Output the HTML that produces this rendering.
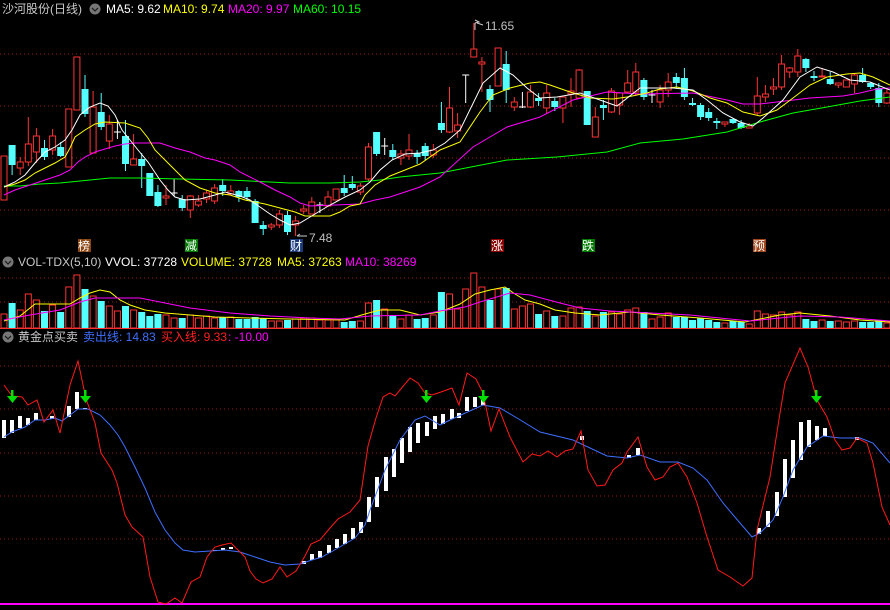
<!DOCTYPE html>
<html><head><meta charset="utf-8">
<style>
html,body{margin:0;padding:0;background:#000;width:890px;height:610px;overflow:hidden}
svg{position:absolute;left:0;top:0}
text{font-family:"Liberation Sans","Noto Sans CJK SC",sans-serif;font-size:12px}
</style></head><body>
<svg id="s" width="890" height="610" xmlns="http://www.w3.org/2000/svg">
<text x="2" y="13" fill="#c8c8c8">沙河股份(日线)</text>
<circle cx="95" cy="9" r="5.5" fill="#777"/><path d="M92 8l3 3 3-3" stroke="#222" fill="none" stroke-width="1.3"/>
<text x="106" y="13" fill="#fff">MA5: 9.62</text>
<text x="163" y="13" fill="#ffff00">MA10: 9.74</text>
<text x="228" y="13" fill="#ff00ff">MA20: 9.97</text>
<text x="293" y="13" fill="#00ff00">MA60: 10.15</text>

<circle cx="8" cy="262" r="5.5" fill="#777"/><path d="M5 261l3 3 3-3" stroke="#222" fill="none" stroke-width="1.3"/>
<text x="18" y="266" fill="#c8c8c8">VOL-TDX(5,10)</text>
<text x="105" y="266" fill="#fff">VVOL: 37728</text>
<text x="181" y="266" fill="#ffff00">VOLUME: 37728</text>
<text x="277" y="266" fill="#ffff00">MA5: 37263</text>
<text x="345" y="266" fill="#ff00ff">MA10: 38269</text>

<circle cx="8" cy="337" r="5.5" fill="#777"/><path d="M5 336l3 3 3-3" stroke="#222" fill="none" stroke-width="1.3"/>
<text x="18" y="341" fill="#c8c8c8">黄金点买卖</text>
<text x="83" y="341" fill="#3f6fff">卖出线: 14.83</text>
<text x="161" y="341" fill="#ff2020">买入线: 9.33</text>
<text x="228" y="341" fill="#ff00ff">: -10.00</text>
<g id="g"></g>
</svg>
<script>
var o='';
function L(y){o+='<line x1="0" x2="890" y1="'+y+'" y2="'+y+'" stroke="#9a1a1a" stroke-dasharray="1 3"/>';}
[54,106,158,210,278,302,366,409,453,496,539].forEach(L);
function X(i){return 4+i*8.1;}
var C=[
['r',156,200,156,200],['c',145,165,145,175],['r',162,168,157,175],['r',144,162,117,166],['r',136,152,128,163],['c',148,157,140,160],['r',136,150,129,155],['c',147,156,142,157],['r',109,167,109,167],['r',57,110,57,110],
['c',89,114,75,117],['r',107,153,91,153],['c',112,127,93,130],['r',124,141,115,149],['w',132,133,120,139],['c',136,164,120,171],['r',159,165,134,165],['c',159,166,153,188],['c',173,196,173,196],['c',192,206,185,207],
['r',196,198,185,205],['w',193,194,179,196],['c',199,208,195,211],['r',196,210,195,218],['r',201,205,195,207],['r',193,199,190,203],['r',188,201,184,204],['c',185,191,179,196],['r',191,194,185,195],['c',191,197,190,202],
['c',191,197,187,201],['c',201,223,199,223],['c',225,229,221,235],['r',225,227,223,230],['r',214,225,210,228],['c',215,232,211,235],['r',221,225,216,236],['r',209,211,205,214],['r',202,214,197,214],['w',205,206,202,213],
['r',197,206,191,207],['r',189,200,189,200],['c',188,193,175,196],['c',184,188,176,190],['r',186,192,183,195],['r',147,179,143,181],['c',132,154,132,156],['w',146,147,138,155],['c',150,157,144,160],['r',154,158,150,165],
['r',150,156,134,160],['c',153,157,150,164],['c',146,156,143,160],['r',150,155,144,158],['c',123,130,102,133],
['r',108,132,87,133],['r',125,131,113,138],['w',75,76,75,103],['r',49,57,23,57],['r',62,64,57,92],['c',89,100,85,112],['r',48,86,48,86],['c',64,90,51,103],['r',102,107,97,111],['w',107,108,92,108],
['r',92,107,85,108],['c',98,101,93,106],['r',93,108,85,113],['c',101,107,98,111],['r',97,108,97,123],['r',91,94,78,107],['r',70,98,69,99],['c',91,125,91,125],['r',117,137,107,137],['c',105,108,100,120],
['r',91,112,88,113],['r',93,105,92,115],['r',83,92,70,93],['r',72,92,63,96],['c',80,97,78,100],['w',95,96,90,103],['r',90,102,85,108],['r',82,90,73,97],['c',77,83,73,88],['c',78,97,68,100],
['c',103,105,98,106],['c',105,117,103,120],['c',112,118,108,121],['c',121,123,118,129],['r',122,124,122,127],['c',119,123,118,124],['c',123,128,120,129],['r',126,128,123,128],['r',96,113,77,115],['r',94,97,85,102],
['r',87,89,78,95],['r',64,87,55,90],['r',68,72,67,78],['r',56,72,49,77],['c',59,68,58,72],['c',76,78,71,81],['r',76,77,68,77],['c',79,84,72,85],['r',83,85,83,88],['r',80,87,80,87],
['r',75,84,73,93],['c',75,82,68,83],['c',83,87,82,89],['c',88,103,83,107],['r',93,103,88,104]];
var col={r:'#ff3232',c:'#54ffff',w:'#ffffff'};
C.forEach(function(d,i){var x=X(i),c=col[d[0]];
o+='<line x1="'+x+'" x2="'+x+'" y1="'+d[3]+'" y2="'+d[4]+'" stroke="'+c+'"/>';
var h=Math.max(d[2]-d[1],1);
if(d[0]=='r')o+='<rect x="'+(x-3)+'" y="'+d[1]+'" width="6" height="'+h+'" fill="#000" stroke="'+c+'"/>';
else if(d[0]=='c')o+='<rect x="'+(x-3.5)+'" y="'+d[1]+'" width="7" height="'+h+'" fill="'+c+'"/>';
else o+='<line x1="'+(x-3.5)+'" x2="'+(x+3.5)+'" y1="'+d[1]+'" y2="'+d[1]+'" stroke="'+c+'"/>';
});
function P(pts,c,w){o+='<polyline fill="none" stroke="'+c+'" stroke-width="'+(w||1)+'" points="'+pts.map(function(p){return p.join(',')}).join(' ')+'"/>';}
P([[4,186],[20,186],[40,184],[60,183],[90,180],[110,178],[140,178],[180,179],[230,180],[290,183],[330,183],[360,182],[380,180],[400,177],[420,175],[440,173],[507,160],[557,157],[607,152],[640,143],[683,139],[727,132],[760,122],[793,113],[827,107],[860,101],[890,97]],'#00ff00');
P([[4,195],[15,190],[30,185],[45,180],[60,175],[70,170],[78,162],[85,157],[95,152],[105,149],[115,146],[125,144],[135,143],[160,143],[175,148],[190,152],[205,158],[215,160],[230,165],[240,172],[250,177],[260,182],[275,190],[290,197],[300,203],[310,206],[335,205],[360,204],[375,200],[390,197],[405,192],[420,187],[440,177],[473,147],[507,127],[540,117],[573,100],[607,92],[640,94],[693,93],[727,100],[743,104],[760,104],[777,102],[810,98],[843,96],[860,93],[877,89],[890,88]],'#ff00ff');
P([[4,187],[15,184],[25,180],[35,173],[45,168],[55,163],[65,157],[70,148],[75,137],[85,130],[95,124],[105,122],[125,123],[140,128],[148,138],[155,150],[165,160],[175,170],[185,180],[200,188],[215,193],[230,195],[245,200],[265,204],[280,208],[295,212],[305,216],[330,216],[340,212],[350,206],[360,204],[365,195],[375,185],[390,176],[405,170],[420,164],[440,150],[460,142],[480,112],[493,95],[510,88],[530,83],[540,82],[550,85],[570,92],[590,98],[613,99],[627,97],[647,93],[660,89],[677,87],[693,91],[710,98],[727,103],[743,112],[760,116],[777,110],[793,98],[810,85],[827,77],[847,74],[860,73],[873,77],[890,85]],'#ffff00');
P([[4,187],[15,182],[25,175],[35,163],[45,152],[55,147],[65,140],[72,130],[80,115],[90,107],[100,103],[108,106],[115,115],[122,130],[130,140],[138,150],[148,162],[160,180],[168,190],[175,197],[185,200],[200,199],[215,195],[225,192],[240,196],[250,200],[260,207],[270,214],[280,220],[290,225],[300,223],[310,217],[320,211],[330,205],[345,197],[360,190],[370,182],[380,170],[392,160],[405,154],[420,153],[433,150],[445,143],[460,130],[483,83],[500,68],[513,75],[527,88],[540,98],[557,97],[580,93],[600,100],[617,106],[640,88],[673,88],[693,90],[707,100],[723,113],[740,122],[753,126],[763,118],[783,100],[800,77],[817,67],[833,72],[850,80],[870,82],[890,90]],'#ffffff');
// labels
o+='<line x1="475" y1="23" x2="475" y2="30" stroke="#ccc"/><path d="M475 20l4 2-4 1M477 23l6 2" stroke="#ccc" fill="none"/><text x="485" y="30" fill="#c0c0c0">11.65</text>';
o+='<path d="M297 236h10M297 236l3-2" stroke="#ccc" fill="none"/><text x="309" y="242" fill="#c0c0c0">7.48</text>';
[[78,'榜','#8b4513'],[185,'减','#007a00'],[290,'财','#1a3a7a'],[491,'涨','#8b0000'],[582,'跌','#007a00'],[753,'预','#a0461a']].forEach(function(b){
o+='<rect x="'+b[0]+'" y="239" width="13" height="13" fill="'+b[2]+'"/><text x="'+b[0]+'" y="250" fill="#fff">'+b[1]+'</text>';});
// volume
var V=[314,303,310,294,300,311,305,312,287,275,289,296,301,306,311,306,310,312,316,314,315,318,318,315,318,316,318,317,317,319,319,317,318,321,321,320,319,318,318,320,320,320,322,321,321,303,300,309,315,319,315,319,318,315,292,
294,309,289,273,287,300,289,288,309,306,304,314,311,316,316,308,307,311,316,312,312,314,310,308,312,319,317,313,317,317,320,318,320,322,323,321,322,324,311,314,315,312,315,312,319,321,320,321,321,322,321,322,322,320,323];
V.forEach(function(t,i){if(i>=C.length)return;var x=X(i),k=C[i][0];
if(k=='c')o+='<rect x="'+(x-3.5)+'" y="'+t+'" width="7" height="'+(328-t)+'" fill="#54ffff"/>';
else o+='<rect x="'+(x-3)+'" y="'+t+'" width="6" height="'+(328-t)+'" fill="#000" stroke="#ff3232"/>';});
o+='<line x1="0" x2="890" y1="328.5" y2="328.5" stroke="#ff3232"/>';
P([[4,321],[20,316],[35,304],[70,304],[80,298],[90,293],[100,290],[110,292],[120,300],[130,305],[145,310],[165,313],[190,315],[215,317],[250,318],[290,319],[345,320],[365,314],[380,310],[400,310],[420,315],[440,312],[460,304],[475,294],[490,290],[505,287],[515,294],[525,300],[540,304],[555,310],[575,313],[600,315],[630,312],[660,315],[700,318],[745,322],[760,319],[780,315],[800,313],[830,316],[860,320],[890,322]],'#ffff00');
P([[4,320],[30,315],[60,310],[80,302],[95,298],[140,298],[160,302],[190,308],[230,313],[270,316],[310,318],[340,319],[370,316],[420,315],[440,311],[465,307],[480,302],[500,296],[510,293],[530,295],[560,303],[580,308],[610,311],[650,313],[690,315],[720,318],[750,321],[780,318],[800,316],[840,317],[890,321]],'#ff00ff');
// bottom indicator
o+='<line x1="0" x2="890" y1="604" y2="604" stroke="#ff00ff" stroke-width="2"/>';
var W=[[4,420,438],[12,420,433],[20,416,428],[28,418,425],[36,413,420],[52,416,419],[69,406,417],[77,392,409],[85,408,409],[215,550,551],[223,548,550],[231,547,549],[304,561,564],[312,554,560],[320,551,558],[329,545,553],[337,539,548],[345,534,544],[353,528,539],[361,522,533],[369,497,522],[377,477,507],[386,457,491],[394,449,477],[402,438,463],[410,427,452],[418,423,443],[427,422,436],[435,416,429],[443,414,424],[452,409,419],[459,413,418],[467,397,411],[475,397,407],[483,400,405],[582,436,440],[629,455,458],[638,448,455],[759,528,534],[768,511,527],[777,492,516],[785,459,497],[793,440,478],[801,422,460],[809,420,447],[817,426,440],[825,428,436],[857,437,440]];
W.forEach(function(w){o+='<rect x="'+(w[0]-2)+'" y="'+w[1]+'" width="4" height="'+(w[2]-w[1])+'" fill="#fff"/>';});
P([[4,437],[12,432],[25,427],[35,420],[45,420],[55,418],[62,421],[70,415],[78,409],[88,409],[100,415],[110,425],[118,435],[125,447],[135,467],[145,488],[155,512],[165,530],[175,543],[183,550],[195,552],[225,550],[240,552],[255,557],[270,562],[285,565],[300,564],[312,560],[322,557],[338,548],[355,538],[365,525],[370,510],[385,470],[400,440],[415,420],[425,416],[440,425],[450,420],[483,405],[500,408],[517,418],[540,432],[573,440],[607,456],[627,458],[640,455],[660,462],[678,462],[693,468],[707,480],[723,503],[740,523],[752,537],[760,533],[773,520],[783,497],[793,470],[807,447],[823,436],[840,438],[860,438],[873,443],[890,463]],'#3f6fff');
P([[4,385],[12,396],[22,397],[28,405],[37,400],[44,422],[53,410],[60,433],[70,385],[78,361],[86,399],[95,423],[101,453],[112,470],[117,483],[125,515],[132,527],[143,537],[150,577],[158,602],[166,604],[175,598],[182,603],[191,582],[200,577],[207,557],[215,547],[222,545],[231,543],[236,548],[245,557],[250,571],[256,579],[263,583],[272,579],[280,567],[287,577],[296,571],[305,556],[311,544],[320,540],[330,528],[338,519],[350,512],[360,500],[368,446],[376,418],[383,397],[390,393],[395,396],[410,378],[418,383],[425,393],[432,395],[441,392],[452,388],[459,405],[467,373],[476,379],[483,393],[491,431],[499,409],[510,437],[523,462],[532,454],[540,456],[548,451],[557,457],[565,451],[573,449],[581,431],[588,470],[597,486],[605,485],[613,470],[622,463],[627,452],[638,437],[647,467],[655,480],[663,477],[670,467],[678,463],[687,477],[697,503],[707,537],[718,570],[730,577],[743,586],[752,578],[757,530],[770,477],[780,413],[785,383],[800,348],[808,367],[817,400],[827,417],[835,440],[842,450],[850,448],[857,438],[867,443],[873,463],[882,507],[890,525]],'#ff1a1a');
[12,85,426,483,816].forEach(function(x){o+='<rect x="'+(x-1)+'" y="390" width="2.5" height="8" fill="#00e000"/><path d="M'+(x-5)+' 396h11l-5.5 7z" fill="#00e000"/>';});
document.getElementById('g').innerHTML=o;
</script>
</body></html>
